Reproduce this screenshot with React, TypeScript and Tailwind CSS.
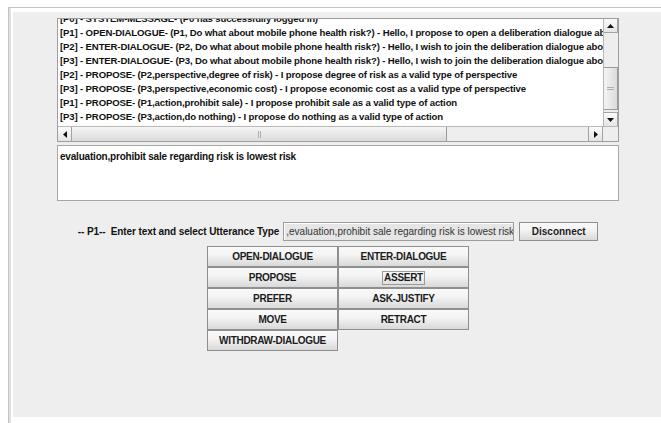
import React from "react";

const logLines = [
  "[P0] - SYSTEM-MESSAGE- (P0 has successfully logged in)",
  "[P1] - OPEN-DIALOGUE- (P1, Do what about mobile phone health risk?) - Hello, I propose to open a deliberation dialogue about mobile phone health risk",
  "[P2] - ENTER-DIALOGUE- (P2, Do what about mobile phone health risk?) - Hello, I wish to join the deliberation dialogue about mobile phone health risk",
  "[P3] - ENTER-DIALOGUE- (P3, Do what about mobile phone health risk?) - Hello, I wish to join the deliberation dialogue about mobile phone health risk",
  "[P2] - PROPOSE- (P2,perspective,degree of risk) - I propose degree of risk as a valid type of perspective",
  "[P3] - PROPOSE- (P3,perspective,economic cost) - I propose economic cost as a valid type of perspective",
  "[P1] - PROPOSE- (P1,action,prohibit sale) - I propose prohibit sale as a valid type of action",
  "[P3] - PROPOSE- (P3,action,do nothing) - I propose do nothing as a valid type of action",
];

type Dir = "up" | "down" | "left" | "right";

function Arrow({ dir }: { dir: Dir }) {
  const pts: Record<Dir, string> = {
    up: "0,4 3.5,0 7,4",
    down: "0,0 3.5,4 7,0",
    left: "4,0 0,3.5 4,7",
    right: "0,0 4,3.5 0,7",
  };
  const vertical = dir === "up" || dir === "down";
  return (
    <svg width={vertical ? 7 : 4} height={vertical ? 4 : 7} viewBox={vertical ? "0 0 7 4" : "0 0 4 7"}>
      <polygon points={pts[dir]} fill="#111" />
    </svg>
  );
}

function ScrollButton({ dir, className }: { dir: Dir; className: string }) {
  return (
    <div
      className={`flex items-center justify-center border border-[#a3a3a3] bg-[linear-gradient(to_bottom,#fbfbfb,#e4e4e4)] ${className}`}
    >
      <Arrow dir={dir} />
    </div>
  );
}

function ActionButton({ label, focused }: { label: string; focused?: boolean }) {
  return (
    <button className="flex h-[21px] w-[131px] items-center justify-center border border-[#8f8f8f] bg-[linear-gradient(to_bottom,#f9f9f9_0%,#f4f4f4_40%,#d9d9d9_100%)] text-[10px] font-bold tracking-[-0.3px] text-[#1c1c1c]">
      {focused ? (
        <span className="border border-[#9a9a9a] px-[1px] leading-[12px]">{label}</span>
      ) : (
        label
      )}
    </button>
  );
}

export default function App() {
  return (
    <div className="relative h-[423px] w-[661px] overflow-hidden bg-white font-['Liberation_Sans',Arial,sans-serif] text-[10px] font-bold text-[#111]">
      <div className="ml-[8px] mt-[7px] h-[416px] border-l border-t border-[#c4c4c4]">
        <div className="h-full border-l-2 border-[#e0e0e0] pl-[2px] pt-[4px]">
          <div className="flex h-[405px] w-[650px] flex-col items-center bg-[#eeeeee] pt-[6px]">
            {/* message log with scrollbars */}
            <div className="flex h-[124px] w-[562px] flex-col border border-[#9e9e9e] bg-white">
              <div className="flex h-[107px]">
                <div className="flex-1 overflow-hidden pl-[2px] text-[9.6px] tracking-[-0.15px]">
                  <div className="-mt-[7px]">
                    {logLines.map((line, i) => (
                      <div key={i} className="h-[14px] whitespace-nowrap leading-[14px]">
                        {line}
                      </div>
                    ))}
                  </div>
                </div>
                <div className="flex w-[15px] flex-col border-l border-[#b8b8b8] bg-[#eeeeee]">
                  <ScrollButton dir="up" className="h-[14px] border-l-0 border-t-0" />
                  <div className="flex flex-1 flex-col">
                    <div className="h-[34px]" />
                    <div className="flex h-[43px] items-center justify-center border border-l-0 border-[#9a9a9a] bg-[linear-gradient(to_right,#f4f4f4,#dcdcdc)]">
                      <div className="flex w-[7px] flex-col gap-[1px]">
                        <div className="h-px bg-[#b0b0b0]" />
                        <div className="h-px bg-[#b0b0b0]" />
                      </div>
                    </div>
                  </div>
                  <ScrollButton dir="down" className="h-[14px] border-l-0 border-b-0" />
                </div>
              </div>
              <div className="flex h-[15px] border-t border-[#b8b8b8] bg-[#eeeeee]">
                <ScrollButton dir="left" className="w-[14px] border-l-0 border-t-0 border-b-0" />
                <div className="flex h-full w-[375px] items-center justify-center border-r border-[#9a9a9a] bg-[linear-gradient(to_bottom,#f6f6f6,#dadada)]">
                  <div className="flex h-[7px] gap-[1px]">
                    <div className="w-px bg-[#b0b0b0]" />
                    <div className="w-px bg-[#b0b0b0]" />
                  </div>
                </div>
                <div className="flex-1" />
                <ScrollButton dir="right" className="w-[15px] border-t-0 border-b-0" />
                <div className="w-[15px]" />
              </div>
            </div>

            {/* utterance text area */}
            <div className="mt-[3px] h-[56px] w-[562px] border border-[#a6a6a6] bg-white pl-[2px] pt-[4px] leading-[14px] tracking-[-0.2px]">
              evaluation,prohibit sale regarding risk is lowest risk
            </div>

            {/* prompt row */}
            <div className="mt-[21px] flex h-[19px] items-center">
              <span className="whitespace-pre tracking-[-0.1px]">-- P1--  Enter text and select Utterance Type</span>
              <div className="ml-[4px] flex h-[19px] w-[231px] items-center overflow-hidden border border-[#9c9c9c] bg-[#e6e6e6] pl-[2px] font-normal text-[#333] shadow-[inset_1px_1px_0_#ffffff]">
                <span className="whitespace-nowrap">,evaluation,prohibit sale regarding risk is lowest risk</span>
              </div>
              <button className="ml-[5px] flex h-[19px] w-[79px] items-center justify-center border border-[#8f8f8f] bg-[linear-gradient(to_bottom,#f9f9f9_0%,#f4f4f4_40%,#d9d9d9_100%)] font-bold text-[#1c1c1c]">
                Disconnect
              </button>
            </div>

            {/* utterance type buttons */}
            <div className="mt-[5px] grid w-[262px] grid-cols-2">
              <ActionButton label="OPEN-DIALOGUE" />
              <ActionButton label="ENTER-DIALOGUE" />
              <ActionButton label="PROPOSE" />
              <ActionButton label="ASSERT" focused />
              <ActionButton label="PREFER" />
              <ActionButton label="ASK-JUSTIFY" />
              <ActionButton label="MOVE" />
              <ActionButton label="RETRACT" />
              <ActionButton label="WITHDRAW-DIALOGUE" />
            </div>
          </div>
        </div>
      </div>
    </div>
  );
}
